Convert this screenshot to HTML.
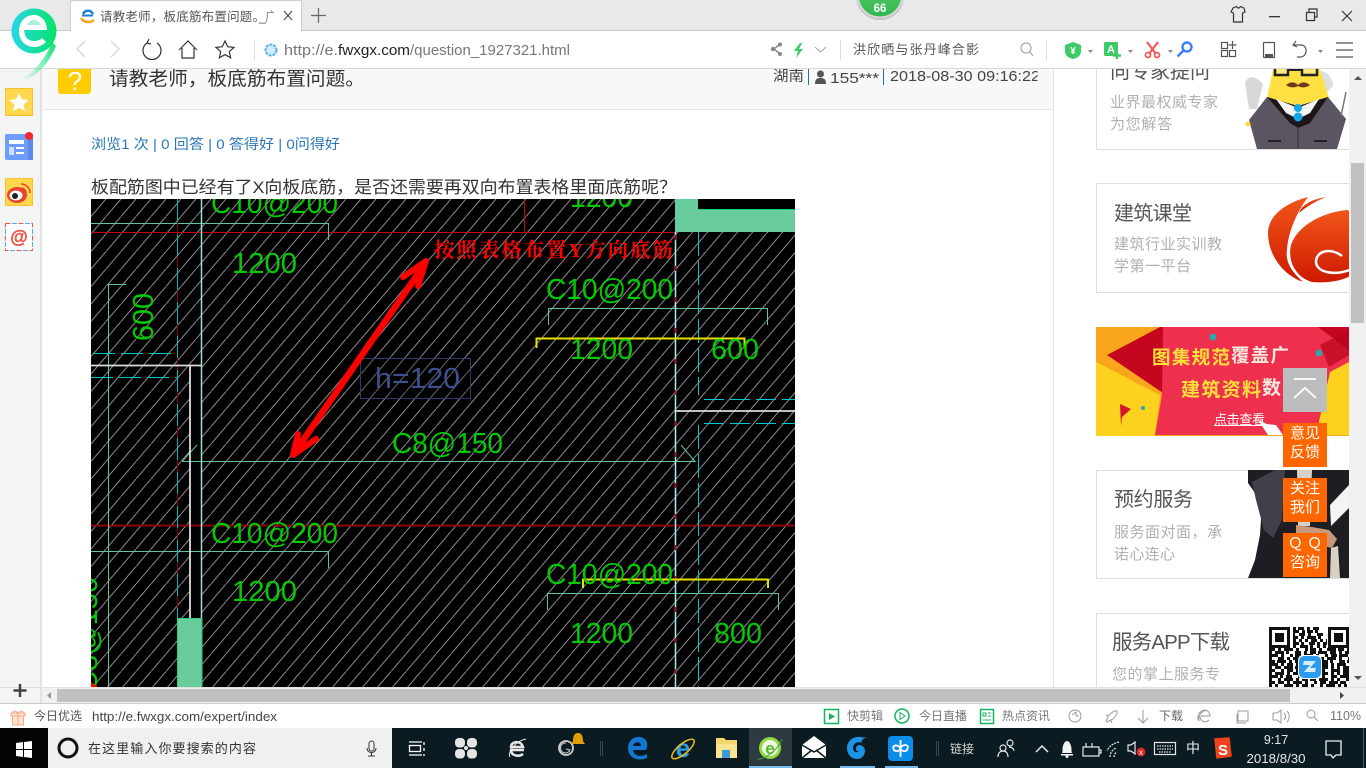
<!DOCTYPE html>
<html lang="zh-CN"><head><meta charset="utf-8"><title>请教老师，板底筋布置问题。</title>
<style>
html,body{margin:0;padding:0;width:1366px;height:768px;overflow:hidden;background:#fff}
svg{display:block}
text{font-family:"Liberation Sans","Noto Sans CJK SC",sans-serif}
.cad text{fill:#00cc00;font-size:29px}
</style></head><body>
<svg width="1366" height="768" viewBox="0 0 1366 768" xmlns="http://www.w3.org/2000/svg">
<defs>
<pattern id="h" width="15" height="17.5" patternUnits="userSpaceOnUse" x="91" y="199"><path d="M-1 18.67L16 -1.17" stroke="#8e8e8e" stroke-width="1" fill="none"/></pattern>
<clipPath id="c"><rect x="91" y="199" width="704" height="488"/></clipPath>
<clipPath id="m"><rect x="700" y="60" width="337.500" height="40"/></clipPath>
<clipPath id="r"><rect x="1096" y="60" width="253" height="640"/></clipPath>
<linearGradient id="lg" x1="0" x2="1"><stop offset="0" stop-color="#27d6ea"/><stop offset="1" stop-color="#08e36a"/></linearGradient>
<linearGradient id="lt" x1="1" y1="0" x2="0" y2="1"><stop offset="0" stop-color="#0be070"/><stop offset="1" stop-color="#0be070" stop-opacity="0"/></linearGradient>
<linearGradient id="sw" x1="0" y1="0" x2="0" y2="1"><stop offset="0" stop-color="#f2561a"/><stop offset="1" stop-color="#cc1a00"/></linearGradient>
<linearGradient id="bd" x1="0" y1="0" x2="0" y2="1"><stop offset="0" stop-color="#6ed06f"/><stop offset="1" stop-color="#2db84f"/></linearGradient>
</defs>

<!-- page -->
<rect width="1366" height="768" fill="#fff"/>
<rect x="0" y="69" width="40" height="634" fill="#f3f5f5"/>
<rect x="40" y="69" width="2" height="634" fill="#e2e2e2"/>
<rect x="42" y="69" width="1011" height="40" fill="#f8f8f8"/>
<rect x="42" y="109" width="1011" height="1" fill="#e4e4e4"/>
<rect x="1053" y="69" width="1" height="620" fill="#e4e4e4"/>

<!-- sidebar icons -->
<rect x="5.500" y="88.500" width="27" height="27" fill="#ffd84d" stroke="#fbc02d"/>
<path d="M19 93l2.900 6.300 6.800.7-5.100 4.500 1.500 6.700-6.100-3.500-6.100 3.500 1.500-6.700-5.100-4.500 6.800-.7z" fill="#fff"/>
<rect x="5" y="134" width="28" height="26" rx="2" fill="#6d9eff"/>
<rect x="28" y="134" width="5" height="26" fill="#5a8bea"/>
<rect x="9" y="140" width="15" height="4" fill="#fff"/><rect x="9" y="147" width="5" height="8" fill="#cfe0ff"/><rect x="16" y="147" width="8" height="2" fill="#fff"/><rect x="16" y="152" width="8" height="2" fill="#fff"/>
<circle cx="29" cy="136" r="4" fill="#f9262d"/>
<rect x="5.500" y="178.500" width="27" height="27" fill="#ffd84d" stroke="#fbc02d"/>
<ellipse cx="17" cy="195" rx="10" ry="8" fill="#e8452e"/><ellipse cx="16" cy="195.500" rx="6.500" ry="5" fill="#fff"/><circle cx="15" cy="196" r="3" fill="#222"/>
<path d="M21 184a9 9 0 0 1 9 9M21 188a5 5 0 0 1 5 5" fill="none" stroke="#e8452e" stroke-width="1.500"/>
<rect x="5.500" y="223.500" width="27" height="27" fill="#fff" stroke="#e8574a" stroke-dasharray="5 8"/>
<rect x="5.500" y="223.500" width="27" height="27" fill="none" stroke="#56a8ee" stroke-dasharray="5 8" stroke-dashoffset="6.500"/>
<text x="19" y="243" font-size="18" font-weight="bold" fill="#e8574a" stroke="#e8574a" stroke-width=".4" text-anchor="middle">@</text>

<!-- question head -->
<path d="M58 60h33v31a3 3 0 0 1-3 3H61a3 3 0 0 1-3-3z" fill="#ffcc00"/>
<text x="75" y="90" font-size="26" fill="#fff" text-anchor="middle">?</text>
<text x="109" y="85" font-size="19" fill="#333" textLength="256" lengthAdjust="spacingAndGlyphs">请教老师，板底筋布置问题。</text>
<g clip-path="url(#m)">
<text x="773" y="81" font-size="14.500" fill="#444" textLength="31" lengthAdjust="spacingAndGlyphs">湖南</text>
<rect x="808" y="69" width="1" height="16" fill="#1f6fb2"/>
<circle cx="820.500" cy="74" r="3.500" fill="#555"/><path d="M815 84c0-5 2-6 5.500-6s5.500 1 5.500 6z" fill="#555"/>
<text x="830" y="83" font-size="15" fill="#444" textLength="49" lengthAdjust="spacingAndGlyphs">155***</text>
<rect x="883" y="69" width="1" height="16" fill="#1f6fb2"/>
<text x="890" y="81" font-size="15" fill="#444" textLength="150" lengthAdjust="spacingAndGlyphs">2018-08-30 09:16:22</text>
</g>
<text x="91" y="149" font-size="14" fill="#2a76b8" textLength="249" lengthAdjust="spacingAndGlyphs">浏览1 次 | 0 回答 | 0 答得好 | 0问得好</text>
<text x="91" y="193" font-size="17" fill="#333" textLength="586" lengthAdjust="spacingAndGlyphs">板配筋图中已经有了X向板底筋，是否还需要再双向布置表格里面底筋呢？</text>

<!-- CAD -->
<g clip-path="url(#c)" class="cad">
<rect x="91" y="199" width="704" height="488" fill="#000"/>
<rect x="91" y="199" width="704" height="488" fill="url(#h)"/>
<rect x="190" y="365" width="11" height="253" fill="#000"/>
<path d="M675 199h120v33H675z" fill="#68cc9c"/>
<rect x="698" y="199" width="97" height="10" fill="#000"/>
<path d="M698 209.500H795" stroke="#00d870"/>
<rect x="177.500" y="618" width="24.500" height="69" fill="#68cc9c"/>
<path d="M177.500 618.500H202M177.500 618V687M202 618V687" stroke="#25d080" fill="none"/>
<!-- red -->
<path d="M91 232.500H675M524.500 199V232" stroke="#c80014" fill="none"/>
<path d="M91 525.500H795" stroke="#8c0010" stroke-width="2"/>
<!-- teal dims -->
<path d="M91 223.500H328.500V240M108.500 687V284.500H126M91 551.500H328.500V568M548.500 325V308.500H767.500V325M547.500 610V593.500H778.500V610M182 461.500H695L681 445M182 461.500L197 445" stroke="#5fc4a0" fill="none"/>
<!-- cyan -->
<path d="M177.500 199V618" stroke="#00b8c0"/>
<path d="M177.500 222V618" stroke="#8c0010" stroke-dasharray="12 22"/>
<path d="M93 353.500H177M91 377.500H177" stroke="#00c8d0" stroke-dasharray="22 6"/>
<path d="M698.500 232V395M698.500 425V687" stroke="#00c8d0" stroke-dasharray="24 5"/>
<path d="M704 399.500H795M704 423.500H795" stroke="#00c8d0" stroke-dasharray="20 6"/>
<path d="M201.500 199V618" stroke="#9adfe0" stroke-width="1.500"/>
<path d="M675.500 232V687" stroke="#a8f0f0" stroke-width="1.500"/>
<path d="M675.500 235V687" stroke="#c00020" stroke-dasharray="5 26" stroke-width="1.500"/>
<!-- white -->
<path d="M91 365.500H201M190 365V618M675 411H795" stroke="#dcdcdc" stroke-width="1.800" fill="none"/>
<!-- yellow -->
<path d="M536.500 348V338.500H744.500V348" stroke="#e8e000" stroke-width="2" fill="none"/>
<path d="M583 588V579.500H768V588" stroke="#e8e000" stroke-width="2" fill="none"/>
<!-- box -->
<rect x="360.500" y="358.500" width="110" height="40" fill="#000" fill-opacity=".25" stroke="#2c3c6c"/>
<text x="375" y="388" style="fill:#3c5090" textLength="85" lengthAdjust="spacingAndGlyphs">h=120</text>
<!-- texts -->
<text x="211" y="213" textLength="127" lengthAdjust="spacingAndGlyphs">C10@200</text>
<text x="232" y="273" textLength="65" lengthAdjust="spacingAndGlyphs">1200</text>
<text x="570" y="207" textLength="63" lengthAdjust="spacingAndGlyphs">1200</text>
<text x="546" y="299" textLength="127" lengthAdjust="spacingAndGlyphs">C10@200</text>
<text x="570" y="359" textLength="63" lengthAdjust="spacingAndGlyphs">1200</text>
<text x="711" y="359" textLength="48" lengthAdjust="spacingAndGlyphs">600</text>
<text x="392" y="453" textLength="111" lengthAdjust="spacingAndGlyphs">C8@150</text>
<text x="211" y="543" textLength="127" lengthAdjust="spacingAndGlyphs">C10@200</text>
<text x="232" y="601" textLength="65" lengthAdjust="spacingAndGlyphs">1200</text>
<text x="546" y="584" textLength="127" lengthAdjust="spacingAndGlyphs">C10@200</text>
<text x="570" y="643" textLength="63" lengthAdjust="spacingAndGlyphs">1200</text>
<text x="714" y="643" textLength="48" lengthAdjust="spacingAndGlyphs">800</text>
<text transform="translate(153,341) rotate(-90)" textLength="48" lengthAdjust="spacingAndGlyphs">600</text>
<text transform="translate(97,692) rotate(-90)" textLength="115" lengthAdjust="spacingAndGlyphs">C8@150</text>
<path d="M91 687v-5l7 5z" fill="#f00"/>
<text x="434" y="257" style="fill:#f00;font-size:20.500px;font-weight:700;font-family:'Liberation Serif','Noto Serif CJK SC',serif" textLength="239" lengthAdjust="spacing">按照表格布置Y方向底筋</text>
<!-- arrow -->
<path d="M297 449L422 268" stroke="#f00" stroke-width="6.500" stroke-linecap="round"/>
<path d="M403 277L426 261L418 286" fill="none" stroke="#f00" stroke-width="6" stroke-linecap="round" stroke-linejoin="round"/>
<path d="M298 434L293 455L316 439" fill="none" stroke="#f00" stroke-width="6" stroke-linecap="round" stroke-linejoin="round"/>
</g>

<!-- right column cards -->
<g clip-path="url(#r)">
<rect x="1096.500" y="40.500" width="270" height="109" fill="#fff" stroke="#dedede"/>
<rect x="1096.500" y="183.500" width="270" height="109" fill="#fff" stroke="#dedede"/>
<rect x="1096.500" y="470.500" width="270" height="108" fill="#fff" stroke="#dedede"/>
<rect x="1096.500" y="613.500" width="270" height="90" fill="#fff" stroke="#dedede"/>

<!-- mascot -->
<path d="M1245 82c5-8 12-5 18 2l-6 25-8 0z" fill="#b0b0b0" opacity=".5"/>
<path d="M1315 70c10 0 18 6 18 16l-8 8z" fill="#c8c8c8" opacity=".6"/>
<path d="M1275 60h42l12 38-30 12-32-12z" fill="#ffe040"/>
<path d="M1267 97l31 12 30-12 18 22-9 30h-80l-8-29z" fill="#5a5560"/>
<path d="M1267 97L1290 123L1298 128L1310 123L1328 97L1298 106z" fill="#1c1618"/>
<path d="M1276 99l22 9 21-9-9 14-12 6-12-6z" fill="#f4f4f4"/>
<circle cx="1298" cy="108" r="4" fill="#14a4e8"/><circle cx="1298" cy="117" r="4.500" fill="#14a4e8"/>
<path d="M1275 67h13v8h-13zM1302 67h15v8h-15z" fill="#ffe880" stroke="#222" stroke-width="2.500"/><path d="M1288 70h14" stroke="#222" stroke-width="2"/>
<path d="M1286 85c5-4 9-3 12 0 3-3 7-4 12 0-4 3-9 3-12 1-3 2-8 2-12-1z" fill="#6a3a20"/>
<path d="M1268 141h13M1314 141h13" stroke="#222" stroke-width="2"/><path d="M1298 128v20" stroke="#333"/>
<path d="M1346 92l-5 24" stroke="#777" stroke-width="1.500"/>
<circle cx="1248" cy="124" r="2.500" fill="#ffd840"/>
<text x="1110" y="78" font-size="20" fill="#555" textLength="100" lengthAdjust="spacing">向专家提问</text>
<text x="1110" y="107" font-size="15" fill="#b0b0b0" textLength="108" lengthAdjust="spacing">业界最权威专家</text>
<text x="1110" y="129" font-size="15" fill="#b0b0b0" textLength="62" lengthAdjust="spacing">为您解答</text>

<!-- swirl -->
<path d="M1308 197C1285 203 1268 216 1268 233C1268 255 1283 275 1303 282C1292 272 1285 262 1287 250C1288 232 1297 212 1308 197z" fill="url(#sw)"/>
<path d="M1326 197C1314 199 1303 203 1299 213C1306 207 1316 201 1326 197z" fill="url(#sw)"/>
<path d="M1347 210C1325 212 1298 224 1291 245C1287 262 1297 278 1312 282C1325 283 1340 282 1352 275V212z" fill="url(#sw)"/>
<path d="M1352 269C1335 276 1317 273 1316 262C1316 251 1330 247 1342 256" fill="none" stroke="#fff" stroke-width="2.500"/>
<text x="1114" y="220" font-size="20" fill="#555" textLength="78" lengthAdjust="spacing">建筑课堂</text>
<text x="1114" y="249" font-size="15" fill="#b0b0b0" textLength="108" lengthAdjust="spacing">建筑行业实训教</text>
<text x="1114" y="271" font-size="15" fill="#b0b0b0" textLength="77" lengthAdjust="spacing">学第一平台</text>

<!-- banner -->
<rect x="1096" y="327" width="253" height="109" fill="#f9a61c"/>
<path d="M1096 362l64 33-5 41h-59z" fill="#fcd21f"/>
<path d="M1107 355l53-28 6 0 0 68z" fill="#c4061e"/>
<path d="M1163 327h186v108h-194l7-40z" fill="#ee2f4d"/>
<path d="M1318 327h31v23z" fill="#c4061e"/>
<path d="M1330 372l19-10v73h-33z" fill="#fcd21f"/>
<path d="M1320 345l29-15v25l-20 12z" fill="#b8041c" opacity=".7"/>
<path d="M1120 404l11 5-9 8-1 9z" fill="#d8152f"/>
<circle cx="1213" cy="337" r="3.500" fill="#2fa5ad"/><circle cx="1319" cy="353" r="3.500" fill="#2fa5ad"/><circle cx="1143" cy="408" r="2" fill="#2fa5ad"/>
<text x="1152" y="364" font-size="18.500" font-weight="700" fill="#fde13a" textLength="78" lengthAdjust="spacing">图集规范</text>
<text x="1231" y="362" font-size="18.500" font-weight="700" fill="#f5e9e0" textLength="58" lengthAdjust="spacing">覆盖广</text>
<text x="1181" y="396" font-size="19" font-weight="700" fill="#fde13a" textLength="80" lengthAdjust="spacing">建筑资料</text>
<text x="1262" y="394" font-size="19" font-weight="700" fill="#f5e9e0">数</text>
<text x="1214" y="424" font-size="13" fill="#fff" textLength="51" lengthAdjust="spacing">点击查看</text>
<rect x="1214" y="425" width="51" height="1" fill="#fff"/>
<path d="M1258 420l9 4 9 1 7 10h-15z" fill="#fff"/>

<!-- suit image -->
<path d="M1248 470h101v108h-101l7-18 5-25 2-32-14-20z" fill="#1e1d24"/>
<path d="M1252 482l23-12 10 0-3 50-9 18-9-8-8-30z" fill="#40404a"/>
<path d="M1297 470h15l-2 56h-12z" fill="#d8d0c6"/>
<path d="M1349 485l-19 20 1 21 18-18z" fill="#f4f4f4"/>
<path d="M1296 525l16 2 17 3 8 9-5 9-36-8z" fill="#c89878"/>
<path d="M1331 548l7-2 2 32h-10z" fill="#d8d0c0"/>

<!-- service -->
<text x="1114" y="506" font-size="20" fill="#555" textLength="79" lengthAdjust="spacing">预约服务</text>
<text x="1114" y="537" font-size="15" fill="#b0b0b0" textLength="108" lengthAdjust="spacing">服务面对面，承</text>
<text x="1114" y="559" font-size="15" fill="#b0b0b0" textLength="61" lengthAdjust="spacing">诺心连心</text>

<!-- app -->
<text x="1112" y="649" font-size="20.500" fill="#555" textLength="118" lengthAdjust="spacing">服务APP下载</text>
<text x="1112" y="679" font-size="15" fill="#b0b0b0" textLength="108" lengthAdjust="spacing">您的掌上服务专</text>
<!-- QR -->
<g fill="none" stroke="#111" stroke-width="3">
<path d="M1293 628.500h34" stroke-dasharray="3 2 6 3 3 3 6 8"/>
<path d="M1293 631.500h34" stroke-dasharray="6 3 3 2 6 2 3 9"/>
<path d="M1293 634.500h34" stroke-dasharray="2 4 6 3 3 6 6 4"/>
<path d="M1293 637.500h34" stroke-dasharray="5 3 3 3 9 2 3 6"/>
<path d="M1293 640.500h34" stroke-dasharray="3 3 3 3 3 3 6 3"/>
<path d="M1293 643.500h34" stroke-dasharray="6 2 3 5 6 2 3 3"/>
<path d="M1293 646.500h34" stroke-dasharray="3 4 8 2 3 4 3 3"/>
<path d="M1269 649.500h80" stroke-dasharray="6 3 3 3 9 3 3 6 3 2 6 3 3 5 9 2"/>
<path d="M1269 652.500h80" stroke-dasharray="3 3 9 2 3 6 6 3 3 3 6 2 9 3 6 3"/>
<path d="M1269 655.500h80" stroke-dasharray="9 3 3 6 3 2 6 3 9 3 3 6 3 3 6 2"/>
<path d="M1269 658.500h80" stroke-dasharray="3 6 6 3 3 3 9 2 3 3 6 5 3 3 9 3"/>
<path d="M1269 661.500h80" stroke-dasharray="6 2 9 3 3 3 3 6 6 3 3 3 9 2 3 6"/>
<path d="M1269 664.500h80" stroke-dasharray="9 3 3 3 6 3 3 3 9 5 3 3 6 3 3 3"/>
<path d="M1269 667.500h80" stroke-dasharray="3 3 6 3 9 2 3 3 6 3 3 6 9 3 3 3"/>
<path d="M1269 670.500h80" stroke-dasharray="6 6 3 3 6 3 9 3 3 3 6 2 3 6 9 3"/>
<path d="M1269 673.500h80" stroke-dasharray="3 3 9 3 3 3 6 6 3 3 9 2 6 3 3 3"/>
<path d="M1269 676.500h80" stroke-dasharray="9 2 3 3 6 6 3 3 9 3 3 3 3 6 6 3"/>
<path d="M1269 679.500h80" stroke-dasharray="3 6 3 3 9 3 3 3 6 2 6 3 9 3 3 3"/>
<path d="M1269 682.500h80" stroke-dasharray="6 3 6 3 3 3 9 3 3 6 3 3 6 3 9 2"/>
<path d="M1269 685.500h80" stroke-dasharray="3 3 3 6 9 3 3 3 6 3 3 6 3 3 9 3"/>
<path d="M1269 688.500h80" stroke-dasharray="9 3 3 3 3 6 6 3 3 3 9 3 6 2 3 3"/>
</g>
<rect x="1269" y="627" width="21" height="21" fill="#111"/><rect x="1272" y="630" width="15" height="15" fill="#fff"/><rect x="1275" y="633" width="9" height="9" fill="#111"/>
<rect x="1328" y="627" width="21" height="21" fill="#111"/><rect x="1331" y="630" width="15" height="15" fill="#fff"/><rect x="1334" y="633" width="9" height="9" fill="#111"/>
<rect x="1298" y="655" width="24" height="24" rx="5" fill="#fff"/>
<rect x="1299" y="656" width="22" height="22" rx="5" fill="#2d9bf0"/>
<path d="M1304 661h12l-6 7h6l-1 4h-11l6-7h-7z" fill="#d8eeff"/>
</g>

<!-- float buttons -->
<rect x="1283" y="368" width="44" height="44" fill="#bdbdbd"/>
<path d="M1294 379h22" stroke="#fff" stroke-width="1.800"/><path d="M1294 398l11-10 11 10" stroke="#fff" stroke-width="1.800" fill="none"/>
<g fill="#ff6600"><rect x="1283" y="423" width="44" height="44"/><rect x="1283" y="478" width="44" height="44"/><rect x="1283" y="533" width="44" height="44"/></g>
<g fill="#fff" font-size="15" text-anchor="middle">
<text x="1305" y="438">意见</text><text x="1305" y="457">反馈</text>
<text x="1305" y="493">关注</text><text x="1305" y="512">我们</text>
<text x="1305" y="548">Ｑ Ｑ</text><text x="1305" y="567">咨询</text></g>

<!-- v scrollbar -->
<rect x="1349" y="69" width="17" height="620" fill="#f1f1f1"/>
<rect x="1351" y="163" width="13" height="160" fill="#c0c0c0"/>
<path d="M1354 80l4-4 4 4z" fill="#555"/><path d="M1354 676l4 4 4-4z" fill="#555"/>
<!-- h scrollbar -->
<rect x="0" y="687" width="1366" height="1" fill="#e0e0e0"/>
<rect x="0" y="688" width="40" height="15" fill="#f3f5f5"/><rect x="40" y="688" width="2" height="15" fill="#e2e2e2"/>
<rect x="42" y="688" width="1324" height="15" fill="#f1f1f1"/>
<rect x="57" y="689" width="1233" height="13" fill="#c0c0c0"/>
<path d="M51 692v7l-4-3.500z" fill="#999"/><path d="M1340 692v7l4-3.500z" fill="#444"/>
<path d="M20 684v13M13.500 690.500h13" stroke="#444" stroke-width="2.500"/>

<!-- status bar -->
<rect x="0" y="703" width="1366" height="25" fill="#fff"/><rect x="0" y="703" width="1366" height="1" fill="#c9c9c9"/>
<path d="M11 713h14v3H11zM12.500 716h11v9h-11zM18 713v12" fill="#fde2d2" stroke="#f2a988"/>
<path d="M18 713c-3-3-6-2-5 0M18 713c3-3 6-2 5 0" fill="none" stroke="#f2a988"/>
<text x="34" y="720" font-size="12" fill="#555" textLength="48" lengthAdjust="spacing">今日优选</text>
<text x="92" y="721" font-size="13" fill="#444" textLength="185" lengthAdjust="spacingAndGlyphs">http://e.fwxgx.com/expert/index</text>
<rect x="824.500" y="709.500" width="14" height="14" fill="#fff" stroke="#17b45d" stroke-width="1.500"/><path d="M829 713l6 3.500-6 3.500z" fill="#17b45d"/>
<text x="847" y="720" font-size="12" fill="#777" textLength="36" lengthAdjust="spacing">快剪辑</text>
<circle cx="902" cy="716" r="7" fill="none" stroke="#17b45d" stroke-width="1.500"/><path d="M900 712.500l5 3.500-5 3.500z" fill="none" stroke="#17b45d"/>
<text x="919" y="720" font-size="12" fill="#777" textLength="48" lengthAdjust="spacing">今日直播</text>
<rect x="980.500" y="709.500" width="13" height="14" fill="none" stroke="#17b45d" stroke-width="1.500"/><path d="M983 713h3v3h-3zM988 713h3M988 716h3M983 720h8" fill="none" stroke="#17b45d"/>
<text x="1002" y="720" font-size="12" fill="#777" textLength="48" lengthAdjust="spacing">热点资讯</text>
<g fill="none" stroke="#9a9a9a">
<circle cx="1075" cy="716" r="6"/><path d="M1072 715l4-3v4h3"/>
<path d="M1106 721l3-6 5-4 3 0 0 3-4 5-6 3zM1106 715l3 1M1111 720l1 3"/>
<path d="M1143 710v13M1138 718l5 5 5-5"/>
<path d="M1199 721c-3-4 0-11 7-11-5 2-8 6-7 11zM1201 716h9c0-6-7-8-10-3 M1200 716c0 6 6 7 9 4"/>
<path d="M1238 711h10v10h-10zM1237 714v9h9" />
<path d="M1273 713h4l4-3v13l-4-3h-4zM1284 713c2 2 2 5 0 7M1287 711c3 3 3 8 0 11"/>
<circle cx="1311" cy="714" r="4"/><path d="M1314 717l4 4"/></g>
<text x="1159" y="720" font-size="12" fill="#666" textLength="24" lengthAdjust="spacing">下载</text>
<text x="1330" y="720" font-size="12.500" fill="#777" textLength="31" lengthAdjust="spacingAndGlyphs">110%</text>

<!-- taskbar -->
<rect x="0" y="728" width="1366" height="40" fill="#0a1b21"/>
<rect x="0" y="728" width="48" height="40" fill="#020405"/>
<path d="M16 743l7-1v7h-7zM24 742l8-1v8h-8zM16 750h7v7l-7-1zM24 750h8v8l-8-1z" fill="#fff"/>
<rect x="48" y="728" width="344" height="40" fill="#f0f0f0"/>
<circle cx="68" cy="748" r="9" fill="none" stroke="#111" stroke-width="3"/>
<text x="88" y="753" font-size="13" fill="#333" textLength="168" lengthAdjust="spacing">在这里输入你要搜索的内容</text>
<g fill="none" stroke="#333"><rect x="369" y="741" width="5" height="10" rx="2.500"/><path d="M367 748c0 6 9 6 9 0M371.500 752v4M368 756h7"/></g>
<g fill="none" stroke="#fff" stroke-width="1.300"><path d="M409 742h13M409 755h13"/><rect x="409.500" y="745.500" width="11" height="6"/><path d="M424 742v3M424 748v3M424 754v2"/></g>
<g fill="#e4e4e4"><rect x="455" y="738" width="10" height="9.500" rx="4"/><rect x="467" y="738" width="10" height="9.500" rx="4"/><rect x="455" y="749" width="10" height="9.500" rx="4"/><rect x="467" y="749" width="10" height="9.500" rx="4"/></g>
<circle cx="466" cy="748" r="2" fill="#e4e4e4"/>
<path d="M524 750h-13c0 6 8 7 12 4M511 747c0-6 10-7 12 0z" fill="none" stroke="#e8e8e8" stroke-width="2.500"/>
<path d="M510 757c-3-4 5-16 16-18" fill="none" stroke="#e8e8e8"/>
<circle cx="566" cy="748" r="7" fill="none" stroke="#d0d0d0" stroke-width="1.800"/><path d="M566 743a5 5 0 1 0 4 7l-4-1" fill="none" stroke="#d0d0d0"/>
<path d="M573 741c0-6 2-8 5-8s5 2 5 8l2 3h-14z" fill="#e0a000"/>
<rect x="600" y="741" width="1" height="15" fill="#3a474c"/><rect x="602" y="741" width="1" height="15" fill="#3a474c"/>
<path d="M646 750h-13c1 7 9 7 14 4v4c-9 4-19 0-19-10 0-10 10-13 15-10 5 2 5 8 3 12zM633 746h8c0-5-7-5-8 0z" fill="#1477d4"/>
<text x="683" y="757" font-size="26" font-weight="bold" fill="#2a9fe0" text-anchor="middle">e</text>
<ellipse cx="683" cy="749" rx="14" ry="5" transform="rotate(-40 683 749)" fill="none" stroke="#f0c020" stroke-width="1.500"/>
<path d="M716 738h8l2 2h11v18h-21z" fill="#f6d66f"/><path d="M716 744h21v14h-21z" fill="#fbe58f"/><rect x="722" y="750" width="8" height="8" fill="#3c9ad8"/>
<rect x="749" y="728" width="43" height="40" fill="#2d3b40"/>
<circle cx="770" cy="748" r="11" fill="#8fdc40"/><circle cx="770" cy="748" r="8" fill="#f0f8e0"/>
<text x="770" y="754" font-size="17" font-weight="bold" fill="#57b92a" text-anchor="middle">e</text>
<path d="M758 759c5 1 20-8 24-20" fill="none" stroke="#3aa43a"/>
<rect x="749" y="766" width="43" height="2" fill="#76b9ed"/>
<path d="M802 745l12-9 12 9v13h-24z" fill="#fff"/><path d="M802 745l12 7 12-7M802 758l10-8M826 758l-10-8" fill="none" stroke="#0a1b21" stroke-width="1.500"/>
<path d="M861 737c-9-1-14 5-14 11 0 6 4 11 10 11 5 0 8-4 8-8s-3-6-6-6c-2 0-3 2-3 4 0 1 1 3 3 2-3 3-6 0-6-3 0-5 5-7 9-5-1-2-1-3 5-6-1 0-4 1-6 0z" fill="#1d93e6"/>
<rect x="840" y="766" width="35" height="2" fill="#76b9ed"/>
<rect x="888" y="736" width="25" height="25" rx="4" fill="#0d8de8"/>
<path d="M900.500 740v17M893 748c1-4 6-3 7.500 1 2 3 7 3 7-1M900.500 749c-2 3-7 3-7-1M908 748c0-4-5-4-7.500 0" fill="none" stroke="#fff" stroke-width="1.800"/>
<rect x="885" y="766" width="33" height="2" fill="#76b9ed"/>
<rect x="936" y="741" width="1" height="15" fill="#3a474c"/><rect x="938" y="741" width="1" height="15" fill="#3a474c"/>
<text x="950" y="753" font-size="12" fill="#d8d8d8" textLength="24" lengthAdjust="spacing">链接</text>
<g fill="none" stroke="#e8e8e8" stroke-width="1.200"><circle cx="1003" cy="748" r="3"/><path d="M998 757c0-4 2-6 5-6s5 2 5 6"/><circle cx="1010" cy="743" r="3"/><path d="M1009 747c3 0 5 2 5 4"/>
<path d="M1036 752l6-6 6 6" stroke-width="1.500"/>
<path d="M1083 747h16v9h-16zM1099 750h2v3h-2zM1086 743v4M1092 743v4"/>
<path d="M1110 757c0-4 2-7 6-9M1114 757c0-2 1-4 3-5M1119 742c-5 1-10 4-12 9" stroke-dasharray="2 1"/>
<path d="M1128 745h3l4-3v12l-4-3h-3z"/>
<rect x="1154.500" y="742.500" width="21" height="12"/><path d="M1157 746h16M1157 749h16M1159 752h12" stroke-dasharray="1.500 1"/></g>
<path d="M1062 753c1-2 0-4 1-7 1-4 3-5 4-5s3 1 4 5c1 3 0 5 1 7z" fill="#f4f4f4"/><rect x="1061" y="754" width="12" height="1.500" fill="#f4f4f4"/><circle cx="1067" cy="756.500" r="1.500" fill="#f4f4f4"/>
<circle cx="1141" cy="752" r="4.500" fill="#e0242c"/><text x="1141" y="755" font-size="8" fill="#fff" text-anchor="middle">x</text>
<text x="1193" y="753" font-size="14" fill="#f0f0f0" text-anchor="middle">中</text>
<path d="M1215 739l14-1 2 18-14 2z" fill="#f0431e" stroke="#f0431e" stroke-width="1.500" stroke-linejoin="round"/>
<text x="1223" y="755" font-size="15" font-weight="bold" fill="#fff" text-anchor="middle">S</text>
<text x="1276" y="744" font-size="12.500" fill="#e8e8e8" text-anchor="middle">9:17</text>
<text x="1276" y="763" font-size="12.500" fill="#e8e8e8" text-anchor="middle" textLength="59" lengthAdjust="spacingAndGlyphs">2018/8/30</text>
<path d="M1326 741h15v14h-5l-3 3-2-3h-5z" fill="none" stroke="#f0f0f0" stroke-width="1.300"/>
<rect x="1363" y="728" width="1" height="40" fill="#4a575c"/>

<!-- top chrome -->
<rect x="0" y="0" width="1366" height="30" fill="#e9e9e9"/>
<rect x="0" y="30" width="1366" height="1" fill="#c9c9c9"/>
<rect x="0" y="31" width="1366" height="37" fill="#fff"/>
<rect x="0" y="68" width="1366" height="1" fill="#d8d8d8"/>
<path d="M70.500 31V1.500a1 1 0 0 1 1-1H300.500a1 1 0 0 1 1 1V31z" fill="#fff" stroke="#cfcfcf"/>
<rect x="71" y="30" width="230" height="2" fill="#fff"/>
<path d="M93 14a5.500 5.500 0 0 0-10 0" fill="none" stroke="#1a7ed6" stroke-width="2.500"/>
<path d="M82 15.500h11" stroke="#1a7ed6" stroke-width="2"/>
<path d="M81 18c3 5 9 5 13 2" stroke="#f6a21e" stroke-width="2.500" fill="none"/>
<text x="100" y="21" font-size="12.500" fill="#555" textLength="165" lengthAdjust="spacing">请教老师，板底筋布置问题。</text>
<text x="259" y="21" font-size="12.500" fill="#555">_</text><text x="265" y="21" font-size="12.500" fill="#888">广</text>
<rect x="274" y="8" width="6" height="16" fill="#fff"/>
<path d="M284 11l8 9M292 11l-8 9" stroke="#555" stroke-width="1.200"/>
<path d="M318.500 8v15M311 15.500h15" stroke="#666" stroke-width="1.200"/>
<!-- badge -->
<circle cx="880" cy="-4" r="24" fill="#000" opacity=".18"/>
<circle cx="880" cy="-5" r="23.500" fill="#d8d8d8"/>
<circle cx="880" cy="-5" r="21.500" fill="url(#bd)"/>
<text x="880" y="12" font-size="11.500" font-weight="bold" fill="#fff" text-anchor="middle">66</text>
<!-- window buttons -->
<path d="M1233 8l3.500-1.500c1 2 3 2 4 0l3.500 1.500 1 4-2.500 1V22h-9V13l-2.500-1z" fill="none" stroke="#333" stroke-width="1.200" stroke-linejoin="round"/>
<rect x="1269" y="16" width="11" height="1.300" fill="#333"/>
<path d="M1306.500 12.500h8v8h-8zM1309 12v-3h8v8h-2.500" fill="none" stroke="#333" stroke-width="1.200"/>
<path d="M1342 11l10 10M1352 11l-10 10" stroke="#333" stroke-width="1.200"/>
<!-- nav -->
<path d="M85 42l-8 8 8 8" fill="none" stroke="#d0d0d0" stroke-width="1.200" transform="translate(0,-1)"/>
<path d="M111 41l8 8-8 8" fill="none" stroke="#d0d0d0" stroke-width="1.200"/>
<path d="M147 43a9 9 0 1 0 10 0M147 43l2-4M147 43l4 1" fill="none" stroke="#333" stroke-width="1.200"/>
<path d="M179 50l9-9 9 9M182 48v10h12V48" fill="none" stroke="#333" stroke-width="1.200"/>
<path d="M225 41l2.700 5.700 6.300.7-4.700 4.200 1.300 6.200-5.600-3.200-5.600 3.200 1.300-6.200-4.700-4.200 6.300-.7z" fill="none" stroke="#333" stroke-width="1.200"/>
<rect x="254" y="40" width="1" height="20" fill="#ddd"/>
<circle cx="271" cy="50" r="5.500" fill="#cfeafc" stroke="#58b1ec" stroke-width="2" stroke-dasharray="3 1"/>
<text x="284" y="55" font-size="14.500" fill="#777" textLength="54" lengthAdjust="spacingAndGlyphs">http://e.</text>
<text x="338" y="55" font-size="14.500" fill="#222" textLength="72" lengthAdjust="spacingAndGlyphs">fwxgx.com</text>
<text x="410" y="55" font-size="14.500" fill="#777" textLength="160" lengthAdjust="spacingAndGlyphs">/question_1927321.html</text>
<!-- right tools -->
<path d="M780 44l-6 5 6 5" fill="none" stroke="#888" stroke-width="1.500"/><circle cx="780" cy="44.500" r="2" fill="#888"/><circle cx="773" cy="49" r="2.200" fill="#888"/><circle cx="780" cy="54" r="2" fill="#888"/>
<path d="M800 43l-6 8h4l-2 7 7-9h-4l3-6z" fill="#3ccb66"/>
<path d="M815 47l5.500 5 5.500-5" fill="none" stroke="#aaa" stroke-width="1.100"/>
<rect x="840" y="40" width="1" height="20" fill="#ddd"/>
<text x="853" y="54" font-size="13" fill="#555" textLength="126" lengthAdjust="spacing">洪欣晒与张丹峰合影</text>
<circle cx="1026" cy="48" r="5" fill="none" stroke="#aaa" stroke-width="1.200"/><path d="M1030 52l3 4" stroke="#aaa" stroke-width="1.200"/>
<rect x="1046" y="40" width="1" height="20" fill="#ddd"/>
<path d="M1073 42l8 3v6c0 5-4 7-8 8-4-1-8-3-8-8v-6z" fill="#3ccb66"/>
<text x="1073" y="54" font-size="10" font-weight="bold" fill="#fff" text-anchor="middle">¥</text>
<path d="M1088 50h5l-2.500 3zM1128 50h5l-2.500 3zM1168 50h5l-2.500 3zM1318 50h5l-2.500 3z" fill="#888"/>
<rect x="1104" y="42" width="14" height="14" rx="1.500" fill="#3ccb66"/>
<text x="1111" y="53" font-size="11" font-weight="bold" fill="#fff" text-anchor="middle">A</text>
<path d="M1117 52v7M1113 55.500h8" stroke="#3ccb66" stroke-width="2.500"/>
<path d="M1147 42l9 12M1158 42l-9 12" stroke="#f05a5a" stroke-width="2.200"/><circle cx="1148" cy="55" r="2.500" fill="none" stroke="#f05a5a" stroke-width="1.800"/><circle cx="1157" cy="55" r="2.500" fill="none" stroke="#f05a5a" stroke-width="1.800"/>
<circle cx="1187" cy="47" r="4.500" fill="none" stroke="#3a82f0" stroke-width="2.400"/><path d="M1183.500 50.500l-6 6" stroke="#3a82f0" stroke-width="2.600"/>
<g fill="none" stroke="#555" stroke-width="1.200"><rect x="1221.500" y="42.500" width="6" height="6"/><rect x="1221.500" y="50.500" width="6" height="6"/><rect x="1229.500" y="50.500" width="6" height="6"/><path d="M1232.500 41v8M1228.500 45h8"/>
<rect x="1263.500" y="42.500" width="11" height="15" rx="1"/>
<path d="M1296 41l-3 4 4 2M1293 45h8c7 0 7 12-1 12h-3"/>
<path d="M1336 43h17M1336 50h17M1336 57h17"/></g>
<rect x="1265" y="54" width="8" height="3" fill="#555"/>

<!-- logo (on top of chrome) -->
<path d="M52 42C46 58 36 70 22 80C30 80 46 70 56 46z" fill="url(#lt)"/>
<circle cx="34" cy="31" r="22.500" fill="url(#lg)"/>
<path d="M24 30h23c0-9-6-15-13-15-9 0-15 7-15 16 0 10 7 16 15 16 5 0 9-2 12-5l-4-4c-2 2-5 3-8 3-5 0-8-3-9-6z" fill="#fff"/>
<path d="M27 25h14c-1-3-4-5-7-5-3 0-6 2-7 5z" fill="#a8f0dc"/>
</svg>
</body></html>
